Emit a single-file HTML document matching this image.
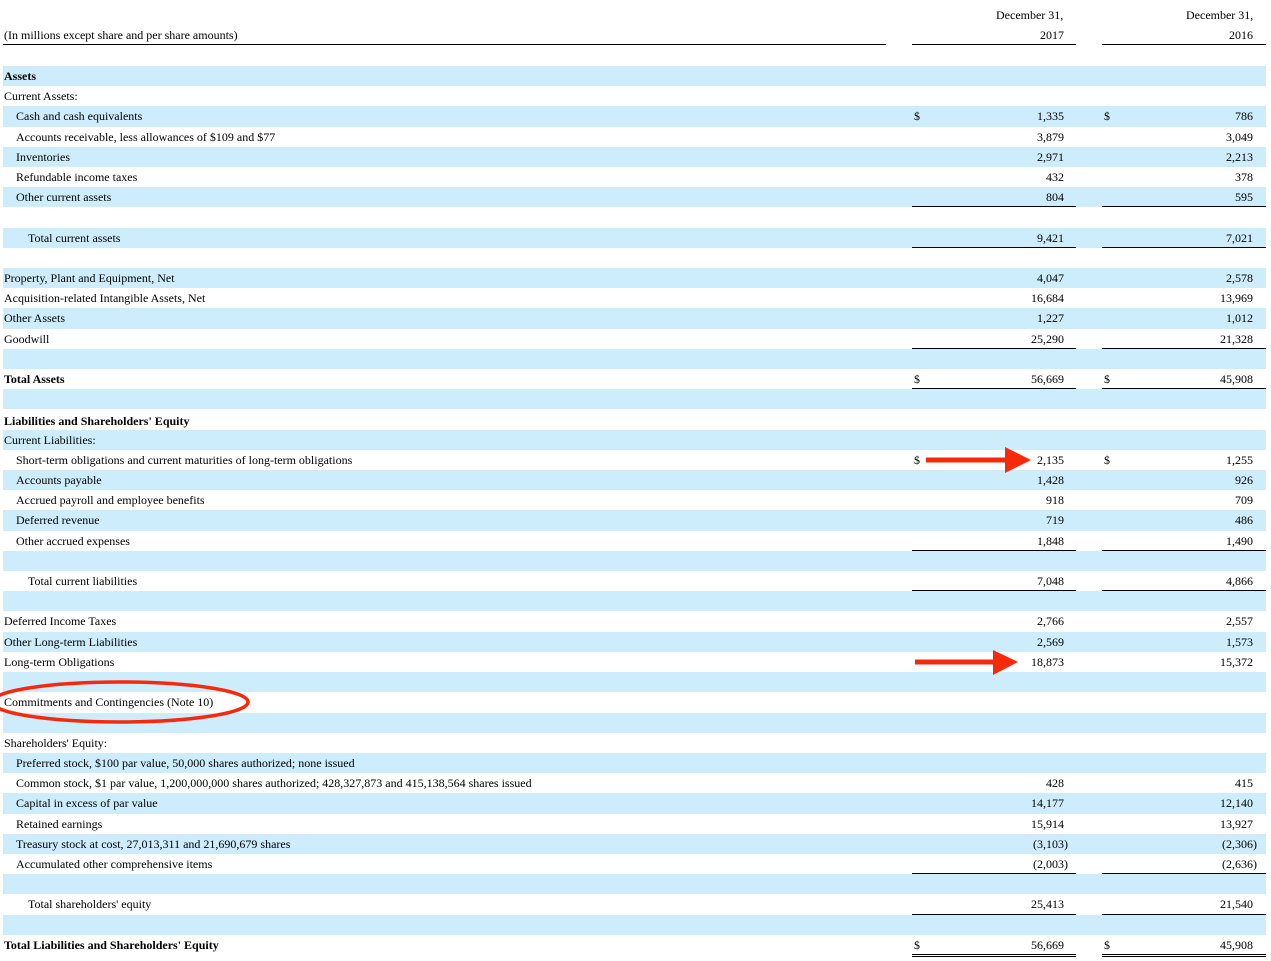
<!DOCTYPE html>
<html><head><meta charset="utf-8"><style>
body{margin:0;width:1271px;height:961px;background:#fff;position:relative;overflow:hidden;font-family:"Liberation Serif",serif;font-size:12px;color:#000}
.t{position:absolute;white-space:nowrap;line-height:14px}
#rows{position:absolute;left:0;top:66px;width:1271px}
.r{position:relative;height:20.21px}
.b:before{content:"";position:absolute;left:3px;right:5px;top:0;bottom:0;background:#cdedfd}
.r span{position:absolute;top:3px;line-height:14px;white-space:nowrap}
.l0{left:4px}.l1{left:16px}.l2{left:28px}
.d1{left:914px}.d2{left:1104px}
.v1{right:207px}.v2{right:18px}
.p1{right:203px}.p2{right:14px}
.u1,.u2,.w1,.w2{position:absolute;bottom:0;height:0;border-bottom:1px solid #000}
.u1,.w1{left:912px;width:164px}.u2,.w2{left:1102px;width:164px}
.w1,.w2{border-bottom:3px double #000;bottom:-2px}
</style></head><body>
<div class="t" style="left:996px;top:8px">December 31,</div>
<div class="t" style="left:1186px;top:8px">December 31,</div>
<div class="t" style="left:1040px;top:28px">2017</div>
<div class="t" style="left:1229px;top:28px">2016</div>
<div class="t" style="left:4px;top:28px">(In millions except share and per share amounts)</div>
<div style="position:absolute;left:3px;width:883px;top:44px;border-top:1px solid #000"></div>
<div style="position:absolute;left:912px;width:164px;top:44px;border-top:1px solid #000"></div>
<div style="position:absolute;left:1102px;width:164px;top:44px;border-top:1px solid #000"></div>
<div id="rows">
<div class="r b"><span class="l0"><b>Assets</b></span></div>
<div class="r"><span class="l0">Current Assets:</span></div>
<div class="r b"><span class="l1">Cash and cash equivalents</span><span class="d1">$</span><span class="v1">1,335</span><span class="d2">$</span><span class="v2">786</span></div>
<div class="r"><span class="l1">Accounts receivable, less allowances of $109 and $77</span><span class="v1">3,879</span><span class="v2">3,049</span></div>
<div class="r b"><span class="l1">Inventories</span><span class="v1">2,971</span><span class="v2">2,213</span></div>
<div class="r"><span class="l1">Refundable income taxes</span><span class="v1">432</span><span class="v2">378</span></div>
<div class="r b"><span class="l1">Other current assets</span><span class="v1">804</span><span class="v2">595</span><i class="u1"></i><i class="u2"></i></div>
<div class="r"></div>
<div class="r b"><span class="l2">Total current assets</span><span class="v1">9,421</span><span class="v2">7,021</span><i class="u1"></i><i class="u2"></i></div>
<div class="r"></div>
<div class="r b"><span class="l0">Property, Plant and Equipment, Net</span><span class="v1">4,047</span><span class="v2">2,578</span></div>
<div class="r"><span class="l0">Acquisition-related Intangible Assets, Net</span><span class="v1">16,684</span><span class="v2">13,969</span></div>
<div class="r b"><span class="l0">Other Assets</span><span class="v1">1,227</span><span class="v2">1,012</span></div>
<div class="r"><span class="l0">Goodwill</span><span class="v1">25,290</span><span class="v2">21,328</span><i class="u1"></i><i class="u2"></i></div>
<div class="r b"></div>
<div class="r"><span class="l0"><b>Total Assets</b></span><span class="d1">$</span><span class="v1">56,669</span><span class="d2">$</span><span class="v2">45,908</span><i class="w1"></i><i class="w2"></i></div>
<div class="r b"></div>
<div class="r"><span class="l0" style="top:5px"><b>Liabilities and Shareholders' Equity</b></span></div>
<div class="r b"><span class="l0">Current Liabilities:</span></div>
<div class="r"><span class="l1">Short-term obligations and current maturities of long-term obligations</span><span class="d1">$</span><span class="v1">2,135</span><span class="d2">$</span><span class="v2">1,255</span></div>
<div class="r b"><span class="l1">Accounts payable</span><span class="v1">1,428</span><span class="v2">926</span></div>
<div class="r"><span class="l1">Accrued payroll and employee benefits</span><span class="v1">918</span><span class="v2">709</span></div>
<div class="r b"><span class="l1">Deferred revenue</span><span class="v1">719</span><span class="v2">486</span></div>
<div class="r"><span class="l1">Other accrued expenses</span><span class="v1">1,848</span><span class="v2">1,490</span><i class="u1"></i><i class="u2"></i></div>
<div class="r b"></div>
<div class="r"><span class="l2">Total current liabilities</span><span class="v1">7,048</span><span class="v2">4,866</span><i class="u1"></i><i class="u2"></i></div>
<div class="r b"></div>
<div class="r"><span class="l0">Deferred Income Taxes</span><span class="v1">2,766</span><span class="v2">2,557</span></div>
<div class="r b"><span class="l0">Other Long-term Liabilities</span><span class="v1">2,569</span><span class="v2">1,573</span></div>
<div class="r"><span class="l0">Long-term Obligations</span><span class="v1">18,873</span><span class="v2">15,372</span></div>
<div class="r b"></div>
<div class="r"><span class="l0">Commitments and Contingencies (Note 10)</span></div>
<div class="r b"></div>
<div class="r"><span class="l0">Shareholders' Equity:</span></div>
<div class="r b"><span class="l1">Preferred stock, $100 par value, 50,000 shares authorized; none issued</span></div>
<div class="r"><span class="l1">Common stock, $1 par value, 1,200,000,000 shares authorized; 428,327,873 and 415,138,564 shares issued</span><span class="v1">428</span><span class="v2">415</span></div>
<div class="r b"><span class="l1">Capital in excess of par value</span><span class="v1">14,177</span><span class="v2">12,140</span></div>
<div class="r"><span class="l1">Retained earnings</span><span class="v1">15,914</span><span class="v2">13,927</span></div>
<div class="r b"><span class="l1">Treasury stock at cost, 27,013,311 and 21,690,679 shares</span><span class="p1">(3,103)</span><span class="p2">(2,306)</span></div>
<div class="r"><span class="l1">Accumulated other comprehensive items</span><span class="p1">(2,003)</span><span class="p2">(2,636)</span><i class="u1"></i><i class="u2"></i></div>
<div class="r b"></div>
<div class="r"><span class="l2">Total shareholders' equity</span><span class="v1">25,413</span><span class="v2">21,540</span><i class="u1"></i><i class="u2"></i></div>
<div class="r b"></div>
<div class="r"><span class="l0"><b>Total Liabilities and Shareholders' Equity</b></span><span class="d1">$</span><span class="v1">56,669</span><span class="d2">$</span><span class="v2">45,908</span><i class="w1"></i><i class="w2"></i></div>
</div>
<svg style="position:absolute;left:0;top:0" width="1271" height="961">
<line x1="926" y1="460" x2="1008" y2="460" stroke="#f52a0c" stroke-width="5"/>
<polygon points="1005,447 1031,460 1005,473" fill="#f52a0c"/>
<line x1="915" y1="662" x2="996" y2="662" stroke="#f52a0c" stroke-width="5"/>
<polygon points="993,650 1018,662 993,675" fill="#f52a0c"/>
<ellipse cx="120" cy="702" rx="128" ry="20" fill="none" stroke="#f52a0c" stroke-width="3.5"/>
</svg>
</body></html>
